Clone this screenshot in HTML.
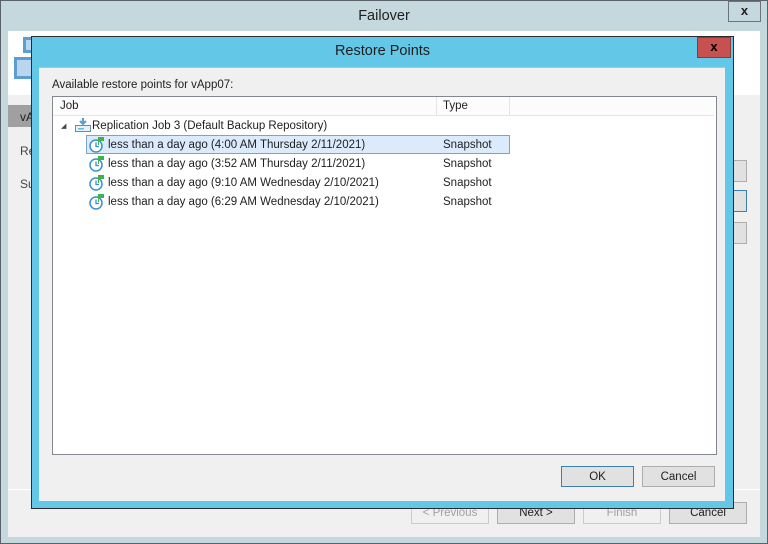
<!DOCTYPE html>
<html><head><style>
*{margin:0;padding:0;box-sizing:border-box}
body{width:768px;height:544px;position:relative;overflow:hidden;font-family:"Liberation Sans",sans-serif;font-size:11.5px;color:#1e1e1e;background:#c5d8de}
.a{position:absolute}
.btn{position:absolute;border:1px solid #adadad;background:#e1e1e1;text-align:center;line-height:21px;font-size:11.5px}
</style></head><body>
<div class="a" style="left:0;top:0;width:768px;height:544px;border:1px solid #5a6168"></div>
<div class="a" style="left:0;top:8px;width:768px;text-align:center;font-size:14.5px;color:#1e1e1e">Failover</div>
<div class="a" style="left:728px;top:1px;width:33px;height:21px;border:1px solid #6b747a;background:#c5d8de;text-align:center;font-weight:bold;font-size:13px;line-height:18px">x</div>
<div class="a" style="left:8px;top:31px;width:752px;height:506px;background:#f0f0f0"></div>
<div class="a" style="left:8px;top:31px;width:752px;height:64px;background:#fff"></div>
<div class="a" style="left:23px;top:37px;width:16px;height:16px;background:#bcd5ee;border:3px solid #5b9fd0"></div>
<div class="a" style="left:14px;top:57px;width:22px;height:22px;background:#bcd5ee;border:3px solid #5b9fd0"></div>
<div class="a" style="left:8px;top:105px;width:40px;height:22px;background:#a0a0a0"></div>
<div class="a" style="left:20px;top:110px;font-size:12px">vA</div>
<div class="a" style="left:20px;top:144px;font-size:12px;color:#444">Re</div>
<div class="a" style="left:20px;top:177px;font-size:12px;color:#444">Su</div>
<div class="a" style="left:8px;top:489px;width:752px;height:1px;background:#fff"></div>
<div class="a" style="left:720px;top:160px;width:27px;height:22px;border:1px solid #adadad;background:#e1e1e1"></div>
<div class="a" style="left:720px;top:190px;width:27px;height:22px;border:1px solid #3c7fb1;background:#e1e1e1"></div>
<div class="a" style="left:720px;top:222px;width:27px;height:22px;border:1px solid #adadad;background:#e1e1e1"></div>
<div class="btn" style="left:411px;top:502px;width:78px;height:22px;color:#a0a0a0;border-color:#cccccc;background:#f0f0f0">&lt; Previous</div>
<div class="btn" style="left:497px;top:502px;width:78px;height:22px">Next &gt;</div>
<div class="btn" style="left:583px;top:502px;width:78px;height:22px;color:#a0a0a0;border-color:#cccccc;background:#f0f0f0">Finish</div>
<div class="btn" style="left:669px;top:502px;width:78px;height:22px">Cancel</div>

<div class="a" style="left:31px;top:36px;width:703px;height:473px;background:#63c8e8;border:1px solid #2b2b2b"></div>
<div class="a" style="left:31px;top:43px;width:703px;text-align:center;font-size:14.5px;color:#1e1e1e">Restore Points</div>
<div class="a" style="left:697px;top:37px;width:34px;height:21px;background:#c75050;border:1px solid #8a3a3a;text-align:center;font-weight:bold;font-size:13px;line-height:17px;color:#000">x</div>
<div class="a" style="left:39px;top:67px;width:686px;height:434px;background:#f0f0f0;border-top:1px solid #a0c8d8"></div>
<div class="a" style="left:52px;top:79px;font-size:11.5px">Available restore points for vApp07:</div>
<div class="a" style="left:52px;top:96px;width:665px;height:359px;background:#fff;border:1px solid #828790"></div>
<div class="a" style="left:53px;top:97px;width:661px;height:19px;border-bottom:1px solid #e5e5e5;background:#fcfcfc"></div>
<div class="a" style="left:436px;top:97px;width:1px;height:18px;background:#e5e5e5"></div>
<div class="a" style="left:509px;top:97px;width:1px;height:18px;background:#e5e5e5"></div>
<div class="a" style="left:60px;top:100px">Job</div>
<div class="a" style="left:443px;top:100px">Type</div>
<div class="a" style="left:61px;top:122px;font-size:7px;color:#444">◢</div>
<svg class="a" style="left:74px;top:116px" width="18" height="18"><rect x="1.5" y="9.5" width="15" height="6" fill="#e8f0f8" stroke="#6a8aa8"/><rect x="4" y="12" width="6" height="1.5" fill="#5bc0de"/><path d="M9 2v6M6 5l3 3 3-3" stroke="#5b9fd0" stroke-width="2" fill="none"/></svg>
<div class="a" style="left:92px;top:120px">Replication Job 3 (Default Backup Repository)</div>
<div class="a" style="left:86px;top:135px;width:424px;height:19px;background:#dcebfc;border:1px solid #7da2ce"></div>
<div class="a" style="left:108px;top:139px">less than a day ago (4:00 AM Thursday 2/11/2021)</div>
<div class="a" style="left:108px;top:158px">less than a day ago (3:52 AM Thursday 2/11/2021)</div>
<div class="a" style="left:108px;top:177px">less than a day ago (9:10 AM Wednesday 2/10/2021)</div>
<div class="a" style="left:108px;top:196px">less than a day ago (6:29 AM Wednesday 2/10/2021)</div>
<div class="a" style="left:443px;top:139px">Snapshot</div>
<div class="a" style="left:443px;top:158px">Snapshot</div>
<div class="a" style="left:443px;top:177px">Snapshot</div>
<div class="a" style="left:443px;top:196px">Snapshot</div>
<svg class="a" style="left:89px;top:136px" width="18" height="76">
<g id="c"><circle cx="7" cy="10" r="6" fill="#fff" stroke="#3a8fd0" stroke-width="1.5"/><path d="M7 6.5v4h3" stroke="#3a8fd0" stroke-width="1.3" fill="none"/><rect x="9" y="1" width="6" height="4" fill="#3cb44b"/><rect x="9" y="1" width="1" height="8" fill="#3cb44b"/></g>
<use href="#c" y="19"/><use href="#c" y="38"/><use href="#c" y="57"/>
</svg>
<div class="btn" style="left:561px;top:466px;width:73px;height:21px;line-height:20px;border-color:#3c7fb1">OK</div>
<div class="btn" style="left:642px;top:466px;width:73px;height:21px;line-height:20px">Cancel</div>
</body></html>
